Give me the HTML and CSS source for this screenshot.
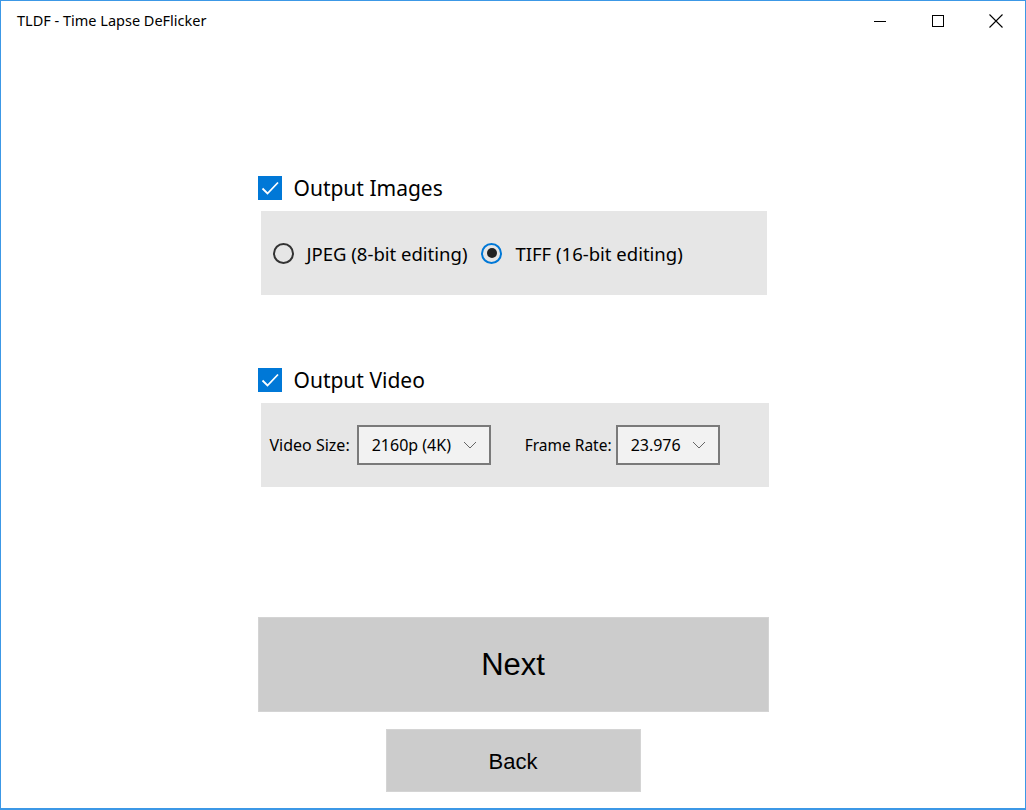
FILE: index.html
```html
<!DOCTYPE html>
<html lang="en">
<head>
    <meta charset="UTF-8">
    <title>TLDF - Time Lapse DeFlicker</title>
    <link rel="stylesheet" href="styles.css">
</head>
<body>
    <div class="window">
        <div class="titlebar">
            <span class="title">TLDF - Time Lapse DeFlicker</span>
            <div class="caption-buttons">
                <span class="caption-btn">
                    <svg width="14" height="14" viewBox="0 0 14 14"><line x1="1" y1="7.5" x2="13" y2="7.5" stroke="#000" stroke-width="1"/></svg>
                </span>
                <span class="caption-btn">
                    <svg width="14" height="14" viewBox="0 0 14 14"><rect x="1.5" y="1.5" width="11" height="11" fill="none" stroke="#000" stroke-width="1"/></svg>
                </span>
                <span class="caption-btn">
                    <svg width="16" height="16" viewBox="0 0 16 16"><path d="M1.5 1.5 L14.5 14.5 M14.5 1.5 L1.5 14.5" stroke="#000" stroke-width="1.1" fill="none"/></svg>
                </span>
            </div>
        </div>

        <div class="content">
            <label class="check-row">
                <span class="checkbox">
                    <svg width="24" height="24" viewBox="0 0 24 24"><path d="M4.5 12.5 L9.5 17.5 L20 6.5" stroke="#fff" stroke-width="1.8" fill="none"/></svg>
                </span>
                Output Images
            </label>
            <div class="panel panel-images">
                <label class="radio-option"><span class="radio"></span>JPEG (8-bit editing)</label>
                <label class="radio-option"><span class="radio checked"></span>TIFF (16-bit editing)</label>
            </div>

            <label class="check-row second">
                <span class="checkbox">
                    <svg width="24" height="24" viewBox="0 0 24 24"><path d="M4.5 12.5 L9.5 17.5 L20 6.5" stroke="#fff" stroke-width="1.8" fill="none"/></svg>
                </span>
                Output Video
            </label>
            <div class="panel panel-video">
                <span class="field-label">Video Size:</span>
                <div class="dropdown size-dropdown">
                    <span>2160p (4K)</span>
                    <svg width="14" height="8" viewBox="0 0 14 8"><path d="M1 1 L7 7 L13 1" stroke="#666" stroke-width="1" fill="none"/></svg>
                </div>
                <span class="field-label rate-label">Frame Rate:</span>
                <div class="dropdown rate-dropdown">
                    <span>23.976</span>
                    <svg width="14" height="8" viewBox="0 0 14 8"><path d="M1 1 L7 7 L13 1" stroke="#666" stroke-width="1" fill="none"/></svg>
                </div>
            </div>

            <button class="btn btn-next">Next</button>
            <button class="btn btn-back">Back</button>
        </div>
    </div>
</body>
</html>
```

FILE: styles.css
```css
html, body {
    margin: 0;
    padding: 0;
    background: #fff;
}
body {
    font-family: "Noto Sans", "Open Sans", sans-serif;
    color: #000;
}
.window {
    width: 1026px;
    height: 810px;
    box-sizing: border-box;
    border: 1px solid #3c98e6;
    border-bottom-width: 2px;
    background: #fff;
    display: flex;
    flex-direction: column;
}
.titlebar {
    height: 39px;
    display: flex;
    align-items: center;
    justify-content: space-between;
}
.title {
    font-size: 14.5px;
    padding-left: 16px;
    padding-bottom: 1px;
}
.caption-buttons {
    display: flex;
    height: 100%;
}
.caption-btn {
    width: 58px;
    display: flex;
    align-items: center;
    justify-content: center;
}
.content {
    width: 511px;
    margin: 0 auto;
    padding-top: 136px;
    display: flex;
    flex-direction: column;
}
.check-row {
    display: flex;
    align-items: center;
    gap: 12px;
    height: 24px;
    font-size: 21px;
}
.check-row.second {
    margin-top: 73px;
}
.checkbox {
    width: 24px;
    height: 24px;
    background: #0078d7;
    display: block;
}
.checkbox svg {
    display: block;
}
.panel {
    background: #e6e6e6;
    height: 84px;
    margin-top: 11px;
    display: flex;
    align-items: center;
}
.panel-images {
    margin-left: 3px;
    width: 506px;
    padding-left: 12px;
    box-sizing: border-box;
    gap: 14px;
}
.panel-video {
    margin-left: 3px;
    width: 508px;
    padding-left: 9px;
    box-sizing: border-box;
}
.radio-option {
    display: flex;
    align-items: center;
    gap: 13px;
    font-size: 18.5px;
}
.radio {
    width: 21px;
    height: 21px;
    box-sizing: border-box;
    border: 2px solid #333;
    border-radius: 50%;
    display: flex;
    align-items: center;
    justify-content: center;
}
.radio.checked {
    border-color: #0078d7;
}
.radio.checked::after {
    content: "";
    width: 10px;
    height: 10px;
    border-radius: 50%;
    background: #222;
}
.field-label {
    font-size: 16px;
    margin-right: 7px;
}
.rate-label {
    margin-left: 34px;
    margin-right: 4px;
    font-size: 15.5px;
}
.dropdown {
    height: 40px;
    box-sizing: border-box;
    border: 2px solid #7a7a7a;
    background: #f2f2f2;
    display: flex;
    align-items: center;
    justify-content: space-between;
    padding: 0 12px 0 13px;
    font-size: 16px;
}
.size-dropdown {
    width: 134px;
}
.rate-dropdown {
    width: 104px;
}
.btn {
    font-family: "Liberation Sans", Arial, sans-serif;
    background: #cccccc;
    border: 1px solid #d4d4d4;
    color: #000;
    padding: 0;
    cursor: pointer;
}
.btn-next {
    margin-top: 130px;
    height: 95px;
    width: 511px;
    font-size: 31px;
}
.btn-back {
    margin: 17px auto 0;
    height: 63px;
    width: 255px;
    font-size: 22px;
    padding-top: 3px;
}
```
